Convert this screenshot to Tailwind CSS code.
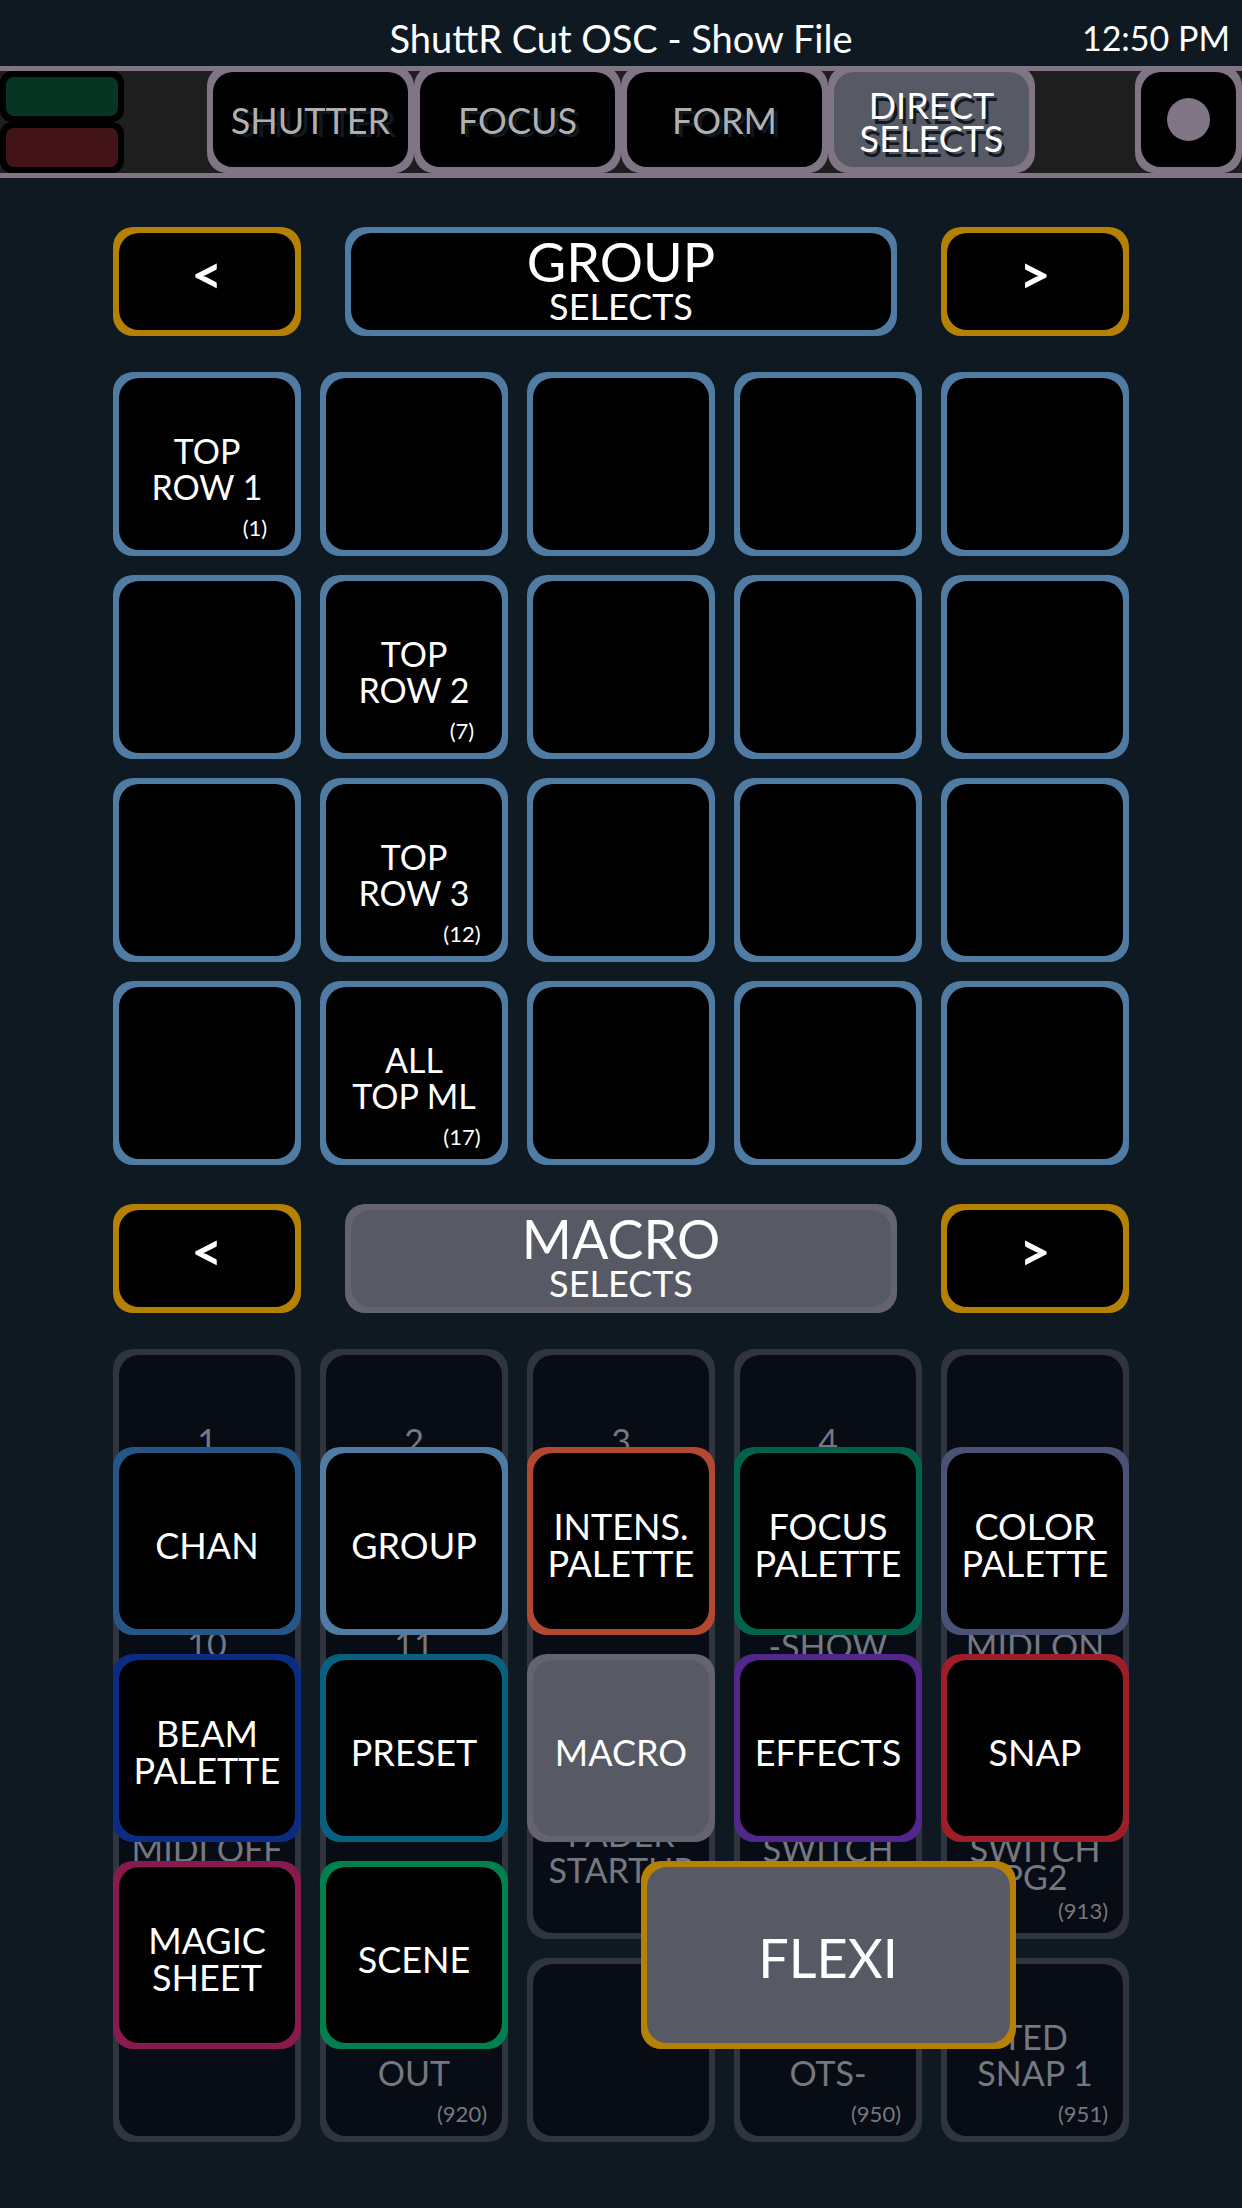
<!DOCTYPE html>
<html lang="en">
<head>
<meta charset="utf-8">
<meta name="viewport" content="width=device-width, initial-scale=1">
<title>ShuttR Cut OSC</title>
<script src="https://cdn.jsdelivr.net/npm/@tailwindcss/browser@4"></script>
</head>
<body class="min-h-screen bg-[#0f1922] font-[Lato,sans-serif] text-white">

<header>
  <div class="grid h-[66px] grid-cols-[1fr_auto_1fr] items-center px-3 pt-2.5">
    <h1 class="col-start-2 text-[38px] leading-none">ShuttR Cut OSC - Show File</h1>
    <time class="justify-self-end text-[34px] leading-none">12:50 PM</time>
  </div>
  <nav class="flex h-28 justify-between border-y-[5px] border-[#807585] bg-[#1e1e1e]">
    <div class="flex w-[124px] flex-col *:flex-1 *:rounded-xl *:border-[6px] *:border-black">
      <div class="bg-black"><div class="h-full rounded-lg bg-[#063524]"></div></div>
      <div class="bg-black"><div class="h-full rounded-lg bg-[#421417]"></div></div>
    </div>
    <div class="-mt-[5px] ml-[83px] mr-[100px] grid flex-1 grid-cols-4 text-4xl text-[#b0b0b0] [&>button]:rounded-[20px] [&>button]:bg-[#807585] [&>button]:p-1.5 [&>button>span]:grid [&>button>span]:size-full [&>button>span]:place-items-center [&>button>span]:rounded-[20px]">
      <button><span class="bg-black text-shadow-[6px_3px_0_#0f1922]">SHUTTER</span></button>
      <button><span class="bg-black text-shadow-[4px_3px_0_#0f1922]">FOCUS</span></button>
      <button><span class="bg-black text-shadow-[4px_3px_0_#0f1922]">FORM</span></button>
      <button aria-pressed="true"><span class="bg-[#575a64] pt-1 leading-[33px] text-white text-shadow-[3px_5px_0_#0f1922]">DIRECT<br>SELECTS</span></button>
    </div>
    <button aria-label="Record" class="-mt-[5px] w-[107px] rounded-[20px] bg-[#807585] p-1.5"><span class="grid size-full place-items-center rounded-[20px] bg-black"><span class="size-[43px] rounded-full bg-[#807585]"></span></span></button>
  </nav>
</header>

<main class="px-[113px] pt-[49px] pb-[67px] [&_button]:rounded-[20px] [&_button]:p-1.5 [&_button>span]:grid [&_button>span]:size-full [&_button>span]:place-items-center [&_button>span]:rounded-[20px]">
  <section>
    <div class="flex h-[109px] gap-11 text-[54px] leading-none">
      <button aria-label="Previous groups" class="w-[188px] bg-[#b58105]"><span class="bg-black pb-4 font-bold">&lt;</span></button>
      <button class="flex-1 bg-[#507ba2]"><span class="content-center bg-black"><b class="font-normal leading-[48px]">GROUP</b><i class="text-4xl leading-10 not-italic">SELECTS</i></span></button>
      <button aria-label="Next groups" class="w-[188px] bg-[#b58105]"><span class="bg-black pb-4 font-bold">&gt;</span></button>
    </div>
    <div class="mt-9 grid auto-rows-[184px] grid-cols-5 gap-[19px] text-[34px] leading-9 [&>button]:bg-[#507ba2] [&>button>span]:bg-black [&_b]:col-start-1 [&_b]:row-start-1 [&_b]:pt-2.5 [&_b]:font-normal [&_small]:col-start-1 [&_small]:row-start-1 [&_small]:w-20 [&_small]:self-end [&_small]:justify-self-end [&_small]:pb-1 [&_small]:text-[22px]">
      <button><span><b>TOP<br>ROW 1</b><small>(1)</small></span></button>
      <button aria-label="Empty"><span></span></button>
      <button aria-label="Empty"><span></span></button>
      <button aria-label="Empty"><span></span></button>
      <button aria-label="Empty"><span></span></button>
      <button aria-label="Empty"><span></span></button>
      <button><span><b>TOP<br>ROW 2</b><small>(7)</small></span></button>
      <button aria-label="Empty"><span></span></button>
      <button aria-label="Empty"><span></span></button>
      <button aria-label="Empty"><span></span></button>
      <button aria-label="Empty"><span></span></button>
      <button><span><b>TOP<br>ROW 3</b><small>(12)</small></span></button>
      <button aria-label="Empty"><span></span></button>
      <button aria-label="Empty"><span></span></button>
      <button aria-label="Empty"><span></span></button>
      <button aria-label="Empty"><span></span></button>
      <button><span><b>ALL<br>TOP ML</b><small>(17)</small></span></button>
      <button aria-label="Empty"><span></span></button>
      <button aria-label="Empty"><span></span></button>
      <button aria-label="Empty"><span></span></button>
    </div>
  </section>

  <section class="mt-[39px]">
    <div class="flex h-[109px] gap-11 text-[54px] leading-none">
      <button aria-label="Previous macros" class="w-[188px] bg-[#b58105]"><span class="bg-black pb-4 font-bold">&lt;</span></button>
      <button aria-expanded="true" class="flex-1 bg-[#65636d]"><span class="content-center bg-[#575a64]"><b class="font-normal leading-[48px]">MACRO</b><i class="text-4xl leading-10 not-italic">SELECTS</i></span></button>
      <button aria-label="Next macros" class="w-[188px] bg-[#b58105]"><span class="bg-black pb-4 font-bold">&gt;</span></button>
    </div>
    <div class="relative mt-9">
      <div class="grid auto-rows-[184px] grid-cols-5 gap-[19px] text-[34px] leading-9 text-[#757880] [&>button]:bg-[#2f343f] [&>button>span]:bg-[#080c14] [&_b]:col-start-1 [&_b]:row-start-1 [&_b]:font-normal [&_small]:col-start-1 [&_small]:row-start-1 [&_small]:w-20 [&_small]:self-end [&_small]:justify-self-end [&_small]:pb-1 [&_small]:text-[22px]">
        <button><span><b>1</b></span></button>
        <button><span><b>2</b></span></button>
        <button><span><b>3</b></span></button>
        <button><span><b>4</b></span></button>
        <button aria-label="Empty"><span></span></button>
        <button><span><b>10</b></span></button>
        <button><span><b>11</b></span></button>
        <button aria-label="Empty"><span></span></button>
        <button><span><b class="pt-1">-SHOW</b></span></button>
        <button><span><b class="pt-1">MIDI ON</b></span></button>
        <button><span><b class="pt-1">MIDI OFF</b></span></button>
        <button aria-label="Empty"><span></span></button>
        <button><span><b class="pt-2.5">FADER<br>STARTUP</b></span></button>
        <button><span><b class="pt-1">SWITCH</b></span></button>
        <button><span><b class="pt-8 leading-7">SWITCH<br>PG2</b><small>(913)</small></span></button>
        <button aria-label="Empty"><span></span></button>
        <button><span><b class="pt-[46px]">OUT</b><small>(920)</small></span></button>
        <button aria-label="Empty"><span></span></button>
        <button><span><b class="pt-[46px]">OTS-</b><small>(950)</small></span></button>
        <button><span><b class="pt-2.5">TED<br>SNAP 1</b><small>(951)</small></span></button>
      </div>

      <!-- Select type menu, opened over the macro grid -->
      <div class="absolute inset-x-0 top-[98px] grid auto-rows-[188px] grid-cols-10 gap-[19px] text-4xl leading-[37px] [&>button]:col-span-2 [&>button>span]:pt-2">
        <button class="bg-[#265686]"><span class="bg-black">CHAN</span></button>
        <button class="bg-[#507ba2]"><span class="bg-black">GROUP</span></button>
        <button class="bg-[#b04832]"><span class="bg-black">INTENS.<br>PALETTE</span></button>
        <button class="bg-[#00624a]"><span class="bg-black">FOCUS<br>PALETTE</span></button>
        <button class="bg-[#4a5276]"><span class="bg-black">COLOR<br>PALETTE</span></button>
        <button class="bg-[#0c2c84]"><span class="bg-black">BEAM<br>PALETTE</span></button>
        <button class="bg-[#08607f]"><span class="bg-black">PRESET</span></button>
        <button aria-pressed="true" class="bg-[#65636d]"><span class="bg-[#575a64]">MACRO</span></button>
        <button class="bg-[#52268a]"><span class="bg-black">EFFECTS</span></button>
        <button class="bg-[#9c1e28]"><span class="bg-black">SNAP</span></button>
        <button class="bg-[#881a50]"><span class="bg-black">MAGIC<br>SHEET</span></button>
        <button class="bg-[#00804e]"><span class="bg-black">SCENE</span></button>
        <div class="col-span-4 col-start-6 grid px-2.5"><button class="bg-[#b58105]"><span class="bg-[#575a64] pt-1.5 text-[54px] leading-none">FLEXI</span></button></div>
      </div>
    </div>
  </section>
</main>
</body>
</html>
